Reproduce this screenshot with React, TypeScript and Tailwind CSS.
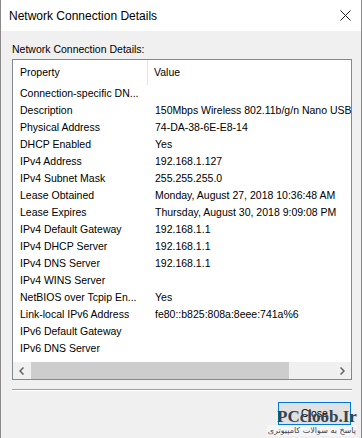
export default function App() {
  const rows: [string, string][] = [
    ["Connection-specific DN...", ""],
    ["Description", "150Mbps Wireless 802.11b/g/n Nano USB Adapter"],
    ["Physical Address", "74-DA-38-6E-E8-14"],
    ["DHCP Enabled", "Yes"],
    ["IPv4 Address", "192.168.1.127"],
    ["IPv4 Subnet Mask", "255.255.255.0"],
    ["Lease Obtained", "Monday, August 27, 2018 10:36:48 AM"],
    ["Lease Expires", "Thursday, August 30, 2018 9:09:08 PM"],
    ["IPv4 Default Gateway", "192.168.1.1"],
    ["IPv4 DHCP Server", "192.168.1.1"],
    ["IPv4 DNS Server", "192.168.1.1"],
    ["IPv4 WINS Server", ""],
    ["NetBIOS over Tcpip En...", "Yes"],
    ["Link-local IPv6 Address", "fe80::b825:808a:8eee:741a%6"],
    ["IPv6 Default Gateway", ""],
    ["IPv6 DNS Server", ""],
  ];

  return (
    <div className="relative w-[362px] h-[438px] overflow-hidden bg-[#f0f0f0] border-x border-[#8a8a8a] font-['Liberation_Sans',Arial,sans-serif] text-black">
      {/* Title bar */}
      <div className="h-[31px] bg-white flex items-center justify-between pl-[8px] pr-[10px]">
        <span className="text-[12px]">Network Connection Details</span>
        <svg width="11" height="11" viewBox="0 0 11 11" className="text-[#222]">
          <path d="M0.5 0.5L10.5 10.5M10.5 0.5L0.5 10.5" stroke="currentColor" strokeWidth="1" />
        </svg>
      </div>

      {/* Body */}
      <div className="pl-[11px] pt-[11px] text-[10.5px]">
        <div className="h-[15px] leading-[15px] mb-[2px]">Network Connection Details:</div>

        <div className="w-[340px] h-[321px] border border-[#828790] bg-white flex flex-col">
          <div className="flex h-[25px] leading-[25px] shrink-0">
            <div className="w-[135px] pl-[7px] border-r border-[#e5e5e5]">Property</div>
            <div className="pl-[6px]">Value</div>
          </div>

          <div className="flex-1 overflow-hidden">
            {rows.map(([k, v]) => (
              <div key={k} className="flex h-[17px] leading-[17px] whitespace-nowrap">
                <div className="w-[135px] shrink-0 pl-[7px] overflow-hidden">{k}</div>
                <div className="pl-[7px]">{v}</div>
              </div>
            ))}
          </div>

          {/* Horizontal scrollbar */}
          <div className="flex h-[17px] shrink-0 bg-[#f0f0f0]">
            <div className="w-[17px] flex items-center justify-center">
              <svg width="5" height="8" viewBox="0 0 5 8">
                <path d="M4.5 0.5L1 4L4.5 7.5" stroke="#606060" strokeWidth="1.5" fill="none" />
              </svg>
            </div>
            <div className="flex-1 pl-[1px]">
              <div className="w-[258px] h-full bg-[#cdcdcd]" />
            </div>
            <div className="w-[17px] flex items-center justify-center">
              <svg width="5" height="8" viewBox="0 0 5 8">
                <path d="M0.5 0.5L4 4L0.5 7.5" stroke="#606060" strokeWidth="1.5" fill="none" />
              </svg>
            </div>
          </div>
        </div>

        {/* Separator */}
        <div className="w-[340px] mt-[9px] border-t border-[#a0a0a0] border-b border-b-white" />
      </div>

      <div className="flex justify-end pr-[10px] mt-[11px]">
        <div className="w-[73px] h-[23px] border border-[#0078d7] bg-[#e1e1e1] flex items-center justify-center text-[10.5px]">
          Close
        </div>
      </div>

      {/* Watermark */}
      <div className="absolute left-[276px] top-[408px] text-[17px] leading-none font-bold font-['Liberation_Serif',serif] text-[#38424f]">
        PCcloob.Ir
      </div>
      <div
        dir="rtl"
        className="absolute right-[4px] top-[425px] text-[8px] leading-[11px] font-['DejaVu_Sans',sans-serif] text-[#444] bg-[#f6f6f6] px-[1px]"
      >
        پاسخ به سوالات کامپیوتری
      </div>
    </div>
  );
}
